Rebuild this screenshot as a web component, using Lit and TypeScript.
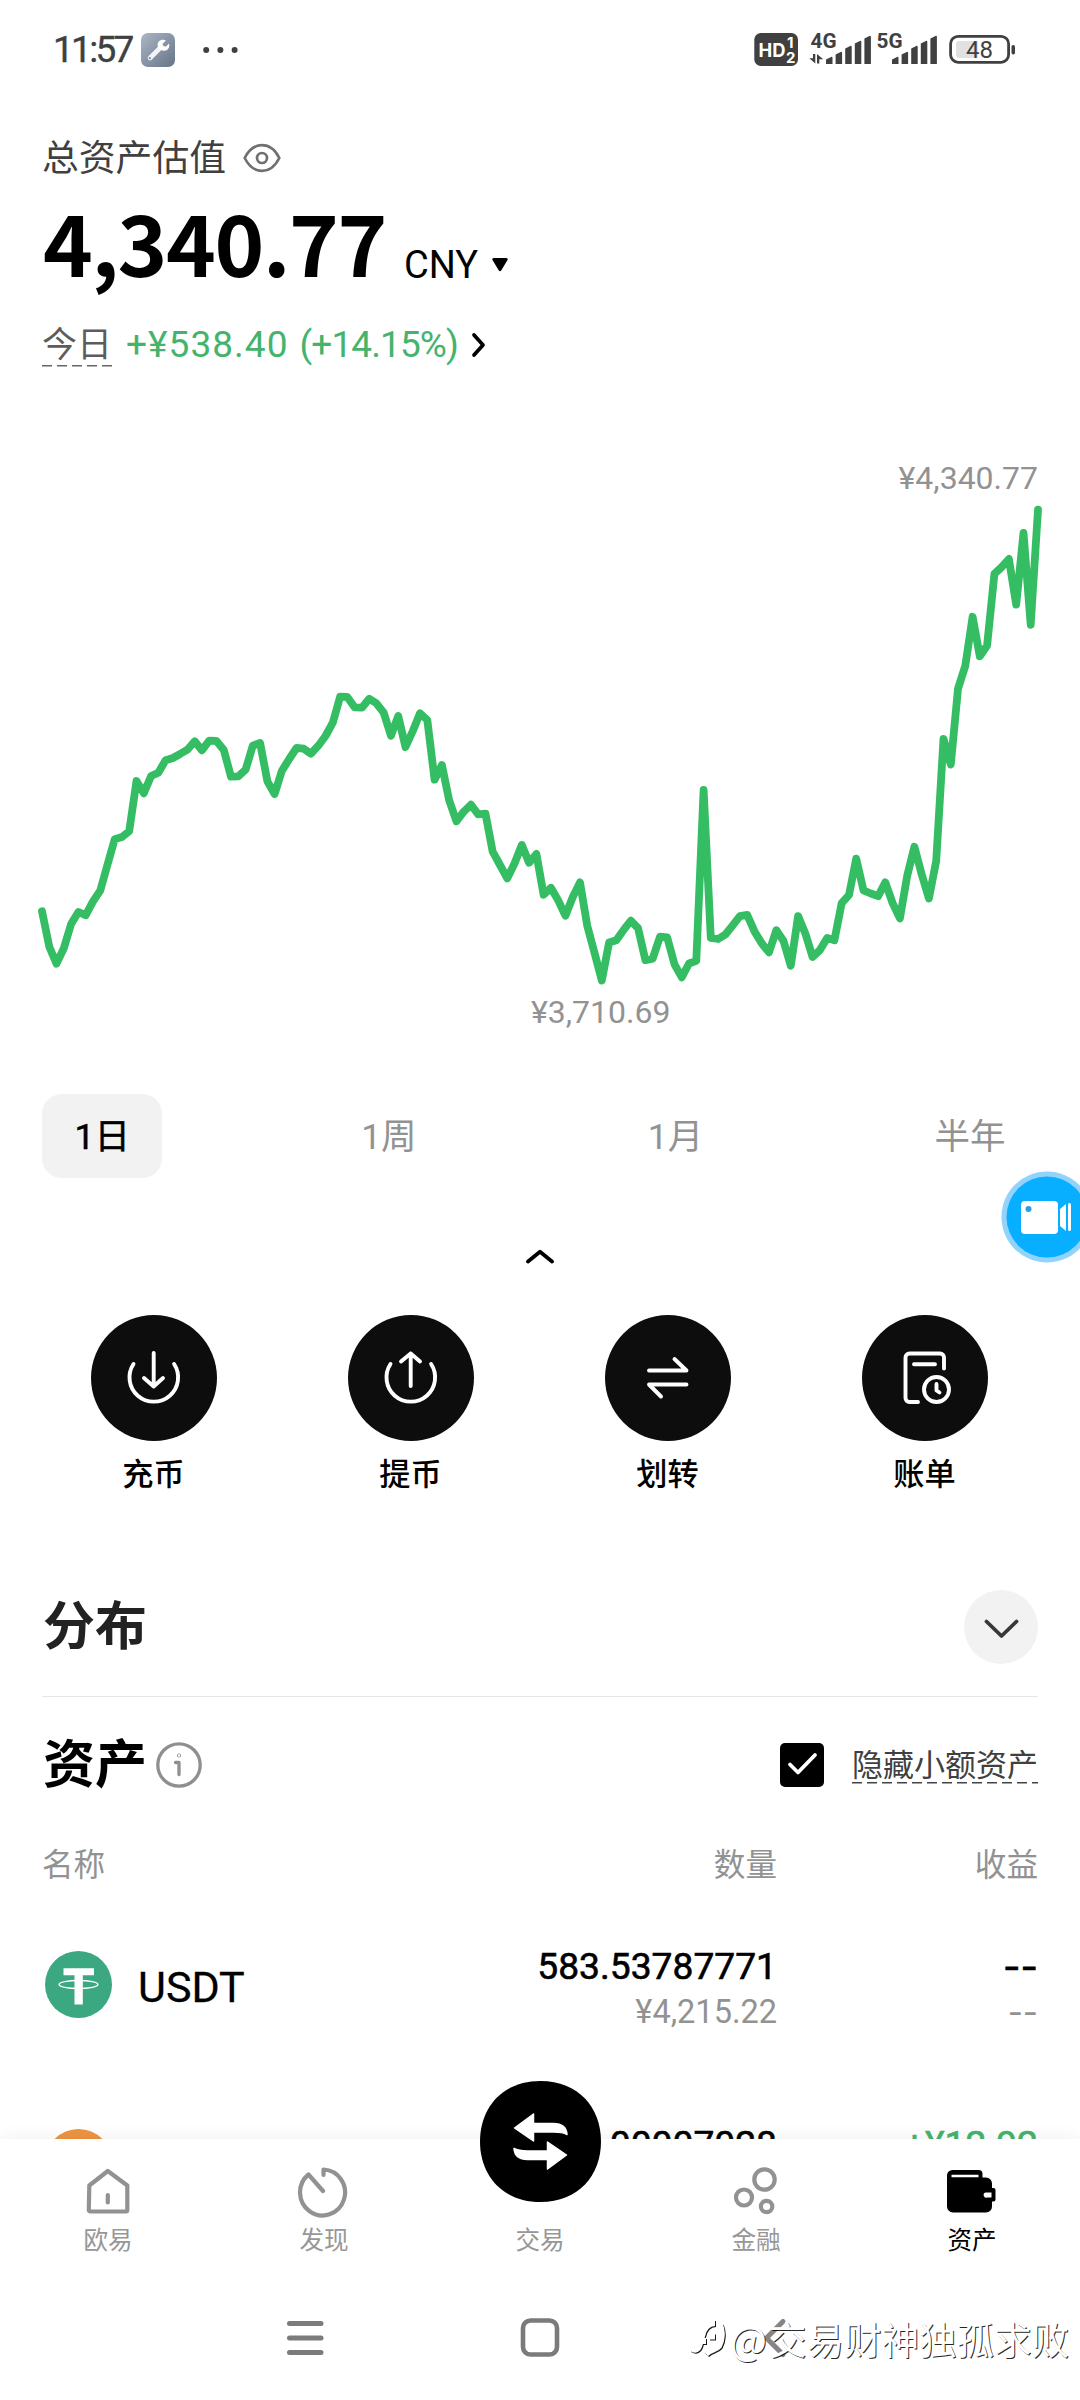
import { LitElement, html, css, svg } from "lit";
import { customElement, property } from "lit/decorators.js";
import { classMap } from "lit/directives/class-map.js";

const SERIES = [
  911.3, 946.7, 963.7, 948.3, 924, 912, 915.3, 901.7, 890.7, 865, 839.3, 837, 831.3, 781, 793.3, 776, 772.7, 760.3,
  758, 754, 749.7, 741.3, 750.3, 740.7, 741, 750, 776.7, 776.3, 769.7, 745.7, 743, 781.3, 794, 770.7, 759, 748,
  748.7, 753.7, 745.7, 736, 722.7, 696.7, 697, 707.3, 707.7, 698.7, 703.3, 712.7, 735.7, 716, 747, 731, 713.3, 720,
  779.7, 765, 800, 821.3, 811.7, 804.7, 814.3, 813.7, 851.7, 865, 878.3, 863.3, 845, 862.7, 854, 894.7, 887.8,
  900.4, 915.7, 897.3, 882.4, 926, 952.8, 980.4, 942.5, 940.2, 929.9, 920.7, 928.3, 960.1, 958.6, 936.7, 937.5,
  964.3, 977.3, 963.5, 960.9, 789.8, 937.9, 939, 934.5, 925.3, 916.1, 914.9, 931.4, 943.3, 952.4, 930.2, 941,
  965.8, 916.1, 933.7, 957, 950.1, 937.9, 940.2, 903.1, 895, 858.7, 890.4, 893.5, 896.2, 882.4, 903.1, 918.4,
  876.3, 846.8, 874.4, 898.5, 861, 738.9, 764.5, 688.8, 665.8, 616.8, 656.2, 645.5, 573.9, 567.1, 559, 604.6, 533,
  624.8, 509.7,
];

@customElement("status-bar")
class StatusBar extends LitElement {
  static styles = css`
    :host { display: flex; height: 100px; box-sizing: border-box; padding: 0 64px 0 53px; align-items: center; color: #404040; }
    .time { font: 400 37px/60px Roboto, sans-serif; letter-spacing: -2.700px; width: 88px; white-space: nowrap; -webkit-text-stroke: 0.400px #404040; }
    .dots { margin-left: 28px; }
    .right { margin-left: auto; }
    svg { display: block; }
    .hd { font: 700 19px Inter, sans-serif; fill: #fff; }
    .num { font: 700 15px Inter, sans-serif; fill: #fff; }
    .net { font: 700 20px Roboto, sans-serif; fill: #404040; }
    .pct { font: 400 24px Roboto, sans-serif; fill: #404040; }
  `;
  bars(x: number) {
    return [57, 52, 46, 41, 36].map(
      (top, i) => svg`<path fill="#404040" d="M${x + i * 9.6} 64V${top + 2.5}l5.6 -2.8a1 1 0 0 1 .9 1V64z"/>`
    );
  }
  render() {
    return html`
      <span class="time">11:57</span>
      <svg width="34" height="34" viewBox="0 0 34 34">
        <defs><linearGradient id="g" x1="0" y1="0" x2="1" y2="1"><stop offset="0" stop-color="#abb6c5"/><stop offset="1" stop-color="#667487"/></linearGradient></defs>
        <rect width="34" height="34" rx="7" fill="url(#g)"/>
        <path d="M9 25L19.5 14.5" stroke="#f1f4f8" stroke-width="4.6" stroke-linecap="round"/>
        <path d="M25 7.5L21.4 11.1 22.6 13.2 25 13.4 28 10.5C29.2 14.5 26.5 18 22.8 17.7 19 17.4 16.6 15 16.6 11.8 16.6 8.300 20.500 5.500 25 7.500z" fill="#fff"/>
        <circle cx="8.800" cy="25.200" r="1.100" fill="#7c899b"/>
      </svg>
      <svg class="dots" width="36" height="8" viewBox="0 0 36 8" fill="#404040">
        <circle cx="3.200" cy="4" r="3"/><circle cx="17.400" cy="4" r="3"/><circle cx="31.600" cy="4" r="3"/>
      </svg>
      <svg class="right" width="262" height="40" viewBox="754 30 262 40">
        <rect x="754.300" y="33" width="43.700" height="33" rx="6.500" fill="#404040"/>
        <text class="hd" x="758.500" y="56.500" textLength="27" lengthAdjust="spacingAndGlyphs">HD</text>
        <text class="num" x="787" y="48">1</text>
        <text class="num" x="786" y="62.500">2</text>
        <text class="net" x="810.500" y="48.200" textLength="26" lengthAdjust="spacingAndGlyphs">4G</text>
        <path fill="#404040" d="M813 54h2.300v9.500l-6 -5.200h3.700zM817 63.500V54l6.200 5.200h-3.900v4.300z"/>
        ${this.bars(826)}
        <text class="net" x="876.500" y="48.200" textLength="26" lengthAdjust="spacingAndGlyphs">5G</text>
        ${this.bars(892)}
        <rect x="950.600" y="36.300" width="58" height="26" rx="7.500" fill="#fff" stroke="#404040" stroke-width="2.800"/>
        <path d="M959 41h19v17h-19a3 3 0 0 1 -3 -3v-11a3 3 0 0 1 3 -3z" fill="#e1e1e1"/>
        <rect x="1011.500" y="45" width="3.500" height="9.500" rx="1.700" fill="#404040"/>
        <text class="pct" x="966" y="58" textLength="27">48</text>
      </svg>
    `;
  }
}

@customElement("balance-summary")
class BalanceSummary extends LitElement {
  static styles = css`
    :host { display: block; padding: 33px 42px 0; font-family: Roboto, "Noto Sans CJK SC", sans-serif; }
    svg { display: block; }
    .title { display: flex; align-items: center; height: 50px; font-size: 36.800px; line-height: 50px; color: #404040; gap: 17px; }
    .title span { padding-top: 1px; }
    .amount { display: flex; height: 100px; margin-top: 7px; }
    .big { font: 700 84.500px/100px "Noto Sans CJK SC", sans-serif; color: #000; letter-spacing: -1.400px; padding-left: 1px; width: 361px; white-space: nowrap; }
    .cur { align-self: flex-end; display: flex; align-items: center; height: 50px; font-size: 38px; gap: 14px; }
    .today { display: flex; align-items: center; height: 50px; margin-top: 30px; font-size: 37px; line-height: 50px; }
    .day { font-size: 35px; color: #5c5c5c; height: 50px; width: 70px; white-space: nowrap; line-height: 52px;
      background: repeating-linear-gradient(90deg, #666 0 10px, transparent 10px 15px) 0 45px / 100% 1.500px no-repeat; }
    .gain { display: flex; color: #45b36b; margin-left: 14px; width: 331px; white-space: nowrap; gap: 11px; }
    .delta { letter-spacing: 1.050px; }
    .ratio { letter-spacing: -0.900px; }
  `;
  render() {
    return html`
      <div class="title"><span>总资产估值</span>
        <svg width="38" height="30" viewBox="0 0 38 30" fill="none" stroke="#707070" stroke-width="2.700">
          <path d="M1.700 15C6 6.500 12 2.200 19 2.200S32 6.500 36.300 15C32 23.500 26 27.800 19 27.800S6 23.500 1.700 15z"/><circle cx="19" cy="15" r="5"/>
        </svg>
      </div>
      <div class="amount"><span class="big">4,340.77</span>
        <span class="cur">CNY
          <svg width="16" height="14" viewBox="0 0 16 14"><path d="M1.500 0h13q1.800 .4 1 2L9.200 12.500q-1.200 1.400 -2.400 0L.5 2Q-.3 .4 1.500 0z"/></svg>
        </span>
      </div>
      <div class="today"><span class="day">今日</span>
        <span class="gain"><span class="delta">+¥538.40</span><span class="ratio">(+14.15%)</span></span>
        <svg width="34" height="26" viewBox="0 0 34 26" fill="none" stroke="#000" stroke-width="3.700" stroke-linecap="round" stroke-linejoin="round"><path d="M17 3L26 13 17 23"/></svg>
      </div>
    `;
  }
}

@customElement("trend-chart")
class TrendChart extends LitElement {
  static styles = css`
    :host { display: block; position: relative; height: 690px; font: 400 32px/40px Roboto, sans-serif; color: #929292; }
    svg { display: block; }
    .high { position: absolute; right: 42px; top: 88px; }
    .low { position: absolute; left: 531px; top: 622px; }
  `;
  render() {
    const step = 996 / (SERIES.length - 1);
    const points = SERIES.map((y, i) => `${(42 + i * step).toFixed(1)},${y}`).join(" ");
    return html`
      <svg width="1080" height="690" viewBox="0 370 1080 690">
        <polyline points=${points} fill="none" stroke="#35bd64" stroke-width="7.800" stroke-linecap="round" stroke-linejoin="round"/>
      </svg>
      <span class="high">¥4,340.77</span><span class="low">¥3,710.69</span>
    `;
  }
}

@customElement("period-tabs")
class PeriodTabs extends LitElement {
  static styles = css`
    :host { display: block; padding: 34px 42px 0; font: 400 35.500px/86px Roboto, "Noto Sans CJK SC", sans-serif; }
    .tabs { display: flex; justify-content: space-between; height: 84px; color: #929292; }
    .tab { padding: 0 32.500px; border-radius: 20px; white-space: nowrap; height: 84px; }
    .on { background: #f2f2f2; color: #000; -webkit-text-stroke: 0.500px #000; }
    .fold { display: block; margin: 71px auto 0; }
  `;
  render() {
    return html`
      <div class="tabs">
        ${["1日", "1周", "1月", "半年"].map((t, i) => html`<span class=${classMap({ tab: true, on: i === 0 })}>${t}</span>`)}
      </div>
      <svg class="fold" width="30" height="15" viewBox="0 0 30 15" fill="none" stroke="#000" stroke-width="3.800" stroke-linecap="round" stroke-linejoin="round"><path d="M3 12.500L15 2.800 27 12.500"/></svg>
    `;
  }
}

const ACTIONS = [
  { label: "充币", icon: svg`<path d="M42.500 49A24.300 24.300 0 1 0 83.100 49M62.700 38V71.500M53 63L62.700 71.500 72 63"/>` },
  { label: "提币", icon: svg`<path d="M42.500 49A24.300 24.300 0 1 0 83.100 49M62.700 71V38.500M53 46.500L62.700 38.500 72 46.500"/>` },
  { label: "划转", icon: svg`<path d="M44 55.500H81.500L69.500 44M81.500 69.500H44L56 81.500"/>` },
  {
    label: "账单",
    icon: svg`<path d="M82 53.500V42.500a4 4 0 0 0 -4 -4H47.500a4 4 0 0 0 -4 4V83a4 4 0 0 0 4 4H56M52 49.200H73"/><circle cx="74.500" cy="74.500" r="12.500"/><path d="M74.500 69V75.500L77.500 77.500"/>`,
  },
];

@customElement("quick-actions")
class QuickActions extends LitElement {
  static styles = css`
    :host { display: grid; grid-template-columns: repeat(4, 257px); padding: 51px 0 0 25px; }
    .item { display: flex; flex-direction: column; align-items: center; gap: 14px; font: 500 31.200px/40px Roboto, "Noto Sans CJK SC", sans-serif; color: #000; }
    .disc { width: 126px; height: 126px; border-radius: 50%; background: #0d0d0d; }
    svg { display: block; }
  `;
  render() {
    return ACTIONS.map(
      (a) => html`<div class="item"><div class="disc">
        <svg width="126" height="126" viewBox="0 0 126 126" fill="none" stroke="#fff" stroke-width="3.900" stroke-linecap="round" stroke-linejoin="round">${a.icon}</svg>
      </div><span>${a.label}</span></div>`
    );
  }
}

const USDT_ICON = svg`<circle cx="33.500" cy="33.500" r="33.500" fill="#3ba882"/><path d="M18.500 17.200h30.500v7h-11.200V53.500h-8.300V24.200h-11z" fill="#fff"/><ellipse cx="33.500" cy="33.500" rx="19.500" ry="4" fill="none" stroke="#fff" stroke-width="1.300"/>`;
const BTC_ICON = svg`<circle cx="33.500" cy="33.500" r="33.500" fill="#ee9343"/>`;

const COINS = [
  { name: "USDT", icon: USDT_ICON, qty: "583.53787771", value: "¥4,215.22", pnl: "--", rate: "--", up: false },
  { name: "", icon: BTC_ICON, qty: "0.00007028", value: "", pnl: "+¥12.92", rate: "", up: true },
];

@customElement("asset-list")
class AssetList extends LitElement {
  static styles = css`
    :host { display: block; padding: 95px 42px 0; font-family: Roboto, "Noto Sans CJK SC", sans-serif; }
    svg { display: block; }
    .dist { display: flex; justify-content: space-between; align-items: center; height: 74px; }
    h2 { margin: 0; font-size: 52px; line-height: 60px; font-weight: 700; color: #222; padding: 2px 0 0 1px; }
    .round { width: 74px; height: 74px; border-radius: 50%; background: #f2f2f2; }
    .rule { height: 1px; background: #e6e6e6; margin-top: 32px; }
    .head { display: flex; align-items: center; height: 60px; margin-top: 38px; }
    .head h2 { color: #000; }
    .info { margin-left: 8px; }
    .check { margin-left: auto; }
    .hide { margin-left: 28px; font-size: 31px; line-height: 42px; height: 40px; color: #404040; white-space: nowrap;
      background: repeating-linear-gradient(90deg, #444 0 10px, transparent 10px 15px) 0 37px / 100% 1.500px no-repeat; }
    .cols { display: grid; grid-template-columns: 1fr 300px 261px; }
    .labels { margin-top: 50px; height: 40px; font-size: 31.600px; line-height: 42px; color: #929292; }
    .r { text-align: right; }
    .rows { padding-top: 10px; }
    .row { height: 178px; align-items: center; }
    .coin { display: flex; align-items: center; padding-left: 3px; gap: 26px; font-size: 43px; line-height: 50px; color: #000; }
    .coin span { padding-top: 5px; -webkit-text-stroke: 0.300px #000; }
    .nums { padding-top: 9px; text-align: right; line-height: 46px; height: 92px; }
    .main { font-size: 37.200px; color: #000; -webkit-text-stroke: 0.600px currentColor; height: 46px; }
    .sub { font-size: 32.500px; color: #929292; height: 46px; }
    .green { color: #45b36b; }
    .dash { font-family: Inter, sans-serif; }
    .main.dash { font-size: 38px; }
    .sub.dash { font-size: 33px; }
  `;
  render() {
    return html`
      <div class="dist"><h2>分布</h2><div class="round">
        <svg width="74" height="74" viewBox="0 0 74 74" fill="none" stroke="#383838" stroke-width="3.800" stroke-linecap="round" stroke-linejoin="round"><path d="M22.500 31.500L37.500 46 52.500 31.500"/></svg>
      </div></div>
      <div class="rule"></div>
      <div class="head"><h2>资产</h2>
        <svg class="info" width="48" height="48" viewBox="0 0 48 48" fill="none" stroke="#8f8f8f" stroke-width="3.300" stroke-linecap="round"><circle cx="24" cy="24" r="21.200"/><path d="M20.500 21.500H24V33.500" stroke-linejoin="round"/><circle cx="24" cy="14.500" r=".4"/></svg>
        <svg class="check" width="44" height="44" viewBox="0 0 44 44"><rect width="44" height="44" rx="5"/><path d="M10 21.500L18 29.500 35 12" fill="none" stroke="#fff" stroke-width="3.800" stroke-linecap="round" stroke-linejoin="round"/></svg>
        <span class="hide">隐藏小额资产</span>
      </div>
      <div class="cols labels"><span>名称</span><span class="r">数量</span><span class="r">收益</span></div>
      <div class="rows">
        ${COINS.map((c) => {
          const dash = c.pnl === "--";
          return html`<div class="cols row">
            <div class="coin"><svg width="67" height="67" viewBox="0 0 67 67">${c.icon}</svg><span>${c.name}</span></div>
            <div class="nums"><div class="main">${c.qty}</div><div class="sub">${c.value}</div></div>
            <div class="nums"><div class=${classMap({ main: true, dash, green: c.up })}>${c.pnl}</div><div class=${classMap({ sub: true, dash })}>${c.rate}</div></div>
          </div>`;
        })}
      </div>
    `;
  }
}

const NAV = [
  { label: "欧易", icon: svg`<path d="M8.500 20L27 5.500 46.500 20V44.500a1.500 1.500 0 0 1 -1.500 1.500H9.500a1.500 1.500 0 0 1 -1.500 -1.500zM27 29.500V37" transform="translate(-.2 -.5)"/>` },
  { label: "发现", icon: svg`<path d="M26.500 9V3.500A22.500 23 0 1 1 11.500 8.500L26 25"/>` },
  { label: "交易", icon: svg`` },
  { label: "金融", icon: svg`<circle cx="35.500" cy="13.500" r="10.200"/><circle cx="15" cy="31.500" r="8"/><circle cx="37.600" cy="40.500" r="5.700"/>` },
  {
    label: "资产",
    icon: svg`<path d="M6.500 3.500H32.500a4 4 0 0 1 4 4V11H40a6 6 0 0 1 6 6V21.500h1.500a2 2 0 0 1 2 2V33a2 2 0 0 1 -2 2H46V40a6 6 0 0 1 -6 6H7a6 6 0 0 1 -6 -6V9a5.500 5.500 0 0 1 5.500 -5.500z" fill="#000" stroke="none" transform="translate(1 .5)"/><path d="M6.500 8.700H33.500V11.200H6.500zM40.500 26.500H46.500V31.500H42a2.500 2.500 0 0 1 -1.500 -5z" fill="#fff" stroke="none"/>`,
  },
];

@customElement("bottom-nav")
class BottomNav extends LitElement {
  @property({ type: Number }) active = 4;
  static styles = css`
    :host { display: block; position: relative; height: 261px; background: #fff; box-shadow: 0 -2px 16px rgba(0, 0, 0, 0.055); }
    svg { display: block; }
    .nav { display: grid; grid-template-columns: repeat(5, 216px); height: 130px; }
    .item { display: flex; flex-direction: column; align-items: center; padding-top: 27px; font: 400 24.600px/30px Roboto, "Noto Sans CJK SC", sans-serif; color: #979797; gap: 5px; }
    .item span { padding-top: 1px; }
    .item.on { color: #000; }
    .trade { position: absolute; left: 480px; top: -58px; }
    .sys { display: block; }
    .mark { position: absolute; left: 690px; top: 173px; display: flex; align-items: center; font: 400 37.500px/52px "Noto Sans CJK SC", sans-serif; color: #fff; text-shadow: 1px 1px 0.500px rgba(0, 0, 0, 0.85); white-space: nowrap; }
    .at { width: 39px; padding-left: 2px; font-size: 39px; }
    .mark svg { filter: drop-shadow(1px 1px 0.500px rgba(0, 0, 0, 0.9)); }
  `;
  render() {
    return html`
      <div class="nav">
        ${NAV.map((n, i) => html`<div class=${classMap({ item: true, on: i === this.active })}>
          <svg width="54" height="54" viewBox="0 0 54 54" fill="none" stroke="#929292" stroke-width="4.200" stroke-linecap="round" stroke-linejoin="round">${n.icon}</svg>
          <span>${n.label}</span></div>`)}
      </div>
      <svg class="trade" width="121" height="121" viewBox="-60.500 -60.500 121 121">
        <path d="M0 -60.500C38 -60.500 60.500 -34 60.500 0S38 60.500 0 60.500 -60.500 34 -60.500 0 -38 -60.500 0 -60.500z"/>
        <g fill="#fff" stroke="#fff" stroke-width="1.500" stroke-linejoin="round">
          <path d="M-26 -13.500L-7 -27.500V-18H13C22 -18 26 -14 26.500 -7 22 -9.500 18 -9.500 13 -9.500H-7V-.5z"/>
          <path d="M-26 -13.500L-7 -27.500V-18H13C22 -18 26 -14 26.500 -7 22 -9.500 18 -9.500 13 -9.500H-7V-.5z" transform="rotate(180)"/>
        </g>
      </svg>
      <svg class="sys" width="1080" height="130" viewBox="0 2269 1080 130" fill="none" stroke="#7b7b7b" stroke-width="5" stroke-linecap="round">
        <path d="M289.500 2323.500H321M289.500 2338H321M289.500 2352.500H321"/>
        <rect x="523" y="2320.500" width="34" height="34" rx="7.500" stroke-width="4.600"/>
        <path d="M783 2321.500L766.500 2338 783 2354.500" stroke="#858585"/>
      </svg>
      <div class="mark">
        <svg width="38" height="42" viewBox="0 0 38 42" fill="none" stroke="#fff" stroke-width="6"><path d="M7 24H16M19 19.500H25M1 31C5 34 8 33 9.500 28L12 19C14 10 18 6 25 6M30 8C33 14 32 24 29 29 26 33 21 32 16 37"/></svg>
        <span class="at">@</span><span>交易财神独孤求败</span>
      </div>
    `;
  }
}

@customElement("app-root")
class AppRoot extends LitElement {
  static styles = css`
    :host { display: block; position: relative; width: 1080px; height: 2400px; overflow: hidden; background: #fff; }
    .content { height: 2139px; overflow: hidden; }
    .cam { position: absolute; left: 1001px; top: 1171px; display: block; }
  `;
  render() {
    return html`
      <div class="content">
        <status-bar></status-bar>
        <balance-summary></balance-summary>
        <trend-chart></trend-chart>
        <period-tabs></period-tabs>
        <quick-actions></quick-actions>
        <asset-list></asset-list>
      </div>
      <bottom-nav></bottom-nav>
      <svg class="cam" width="79" height="92" viewBox="0 0 79 92">
        <circle cx="46" cy="46" r="45.500" fill="#92d3fb"/><circle cx="46" cy="46" r="40.500" fill="#08aeff"/>
        <rect x="20" y="30" width="37" height="33" rx="4" fill="#fff"/><circle cx="27.500" cy="38" r="3" fill="#2a9fe0"/>
        <path d="M59 38L65 33V60L59 55z" fill="#fff"/><rect x="67" y="32" width="3" height="28" rx="1.500" fill="#fff"/>
      </svg>
    `;
  }
}
